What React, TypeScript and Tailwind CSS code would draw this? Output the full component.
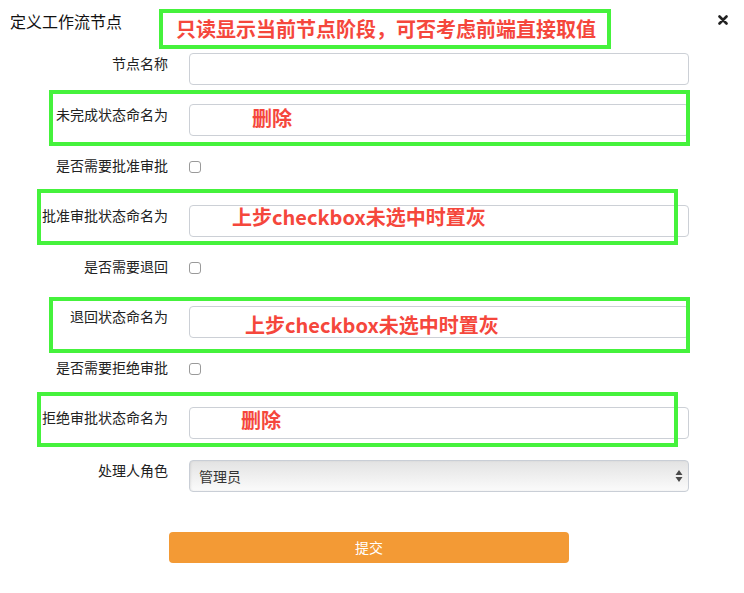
import { useState } from "react";

type Field = {
    label: string;
    kind: "text" | "check" | "select";
};

const fields: Field[] = [
    { label: "节点名称", kind: "text" },
    { label: "未完成状态命名为", kind: "text" },
    { label: "是否需要批准审批", kind: "check" },
    { label: "批准审批状态命名为", kind: "text" },
    { label: "是否需要退回", kind: "check" },
    { label: "退回状态命名为", kind: "text" },
    { label: "是否需要拒绝审批", kind: "check" },
    { label: "拒绝审批状态命名为", kind: "text" },
    { label: "处理人角色", kind: "select" },
];

// green review boxes drawn on top of the dialog
const notes = [
    { box: "left-[49px] top-[90px] w-[641px] h-[56px]", text: "删除", pad: "pl-[199px]" },
    { box: "left-[37px] top-[189px] w-[641px] h-[56px]", text: "上步checkbox未选中时置灰", pad: "pl-[191px]" },
    { box: "left-[49px] top-[297px] w-[641px] h-[56px]", text: "上步checkbox未选中时置灰", pad: "pl-[192px]" },
    { box: "left-[37px] top-[392px] w-[641px] h-[55px]", text: "删除", pad: "pl-[200px]" },
];

const App = () => {
    const [checks, setChecks] = useState<Record<string, boolean>>({});

    return (
        <div
            className="relative w-[744px] h-[593px] bg-white text-[#333] overflow-hidden"
            style={{ fontFamily: '"Noto Sans CJK SC", "Noto Sans", sans-serif' }}
        >
            {/* Header */}
            <div className="flex items-start justify-between h-[53px] pl-[10px] pr-[16px] pt-[11px]">
                <h1 className="text-[16px] leading-[20px] text-[#111]">定义工作流节点</h1>
                <svg width="10" height="10" viewBox="0 0 10 10" className="mt-[4px]">
                    <path d="M1.5 1.5 L8.5 8.5 M8.5 1.5 L1.5 8.5" stroke="#222" strokeWidth="2.6" strokeLinecap="round" />
                </svg>
            </div>

            {/* Form */}
            <div className="flex flex-col gap-[19px]">
                {fields.map((field) => (
                    <div
                        key={field.label}
                        className={`flex ${field.kind === "check" ? "h-[31px]" : "h-[32px]"} ${
                            field.kind === "select" ? "mt-[2px]" : ""
                        }`}
                    >
                        <label className="w-[168px] shrink-0 text-right text-[14px] leading-[20px] text-[#222]">
                            {field.label}
                        </label>
                        <div className="ml-[21px] w-[500px]">
                            {field.kind === "text" && (
                                <input
                                    type="text"
                                    className="w-full h-[32px] px-[10px] rounded-[4px] border border-[#ccd0d6] bg-white text-[14px] outline-none"
                                />
                            )}
                            {field.kind === "check" && (
                                <input
                                    type="checkbox"
                                    checked={!!checks[field.label]}
                                    onChange={() =>
                                        setChecks((prev) => ({ ...prev, [field.label]: !prev[field.label] }))
                                    }
                                    className="appearance-none block mt-[6px] w-[12px] h-[12px] rounded-[3px] border border-[#9a9a9a] bg-white checked:bg-[#3b82f6]"
                                />
                            )}
                            {field.kind === "select" && (
                                <div className="relative">
                                    <select className="appearance-none w-full h-[32px] pl-[9px] rounded-[4px] border border-[#c9ced6] bg-gradient-to-b from-[#e3e3e3] to-[#fbfbfb] text-[14px] text-[#333] outline-none shadow-[inset_1px_0_2px_rgba(0,0,0,0.08)]">
                                        <option>管理员</option>
                                    </select>
                                    <svg
                                        width="8"
                                        height="14"
                                        viewBox="0 0 8 14"
                                        className="absolute right-[6px] top-[9px] pointer-events-none"
                                    >
                                        <path d="M4 1 L7.5 6 L0.5 6 Z M4 13 L7.5 8 L0.5 8 Z" fill="#4a4a4a" />
                                    </svg>
                                </div>
                            )}
                        </div>
                    </div>
                ))}
            </div>

            {/* Submit */}
            <button className="block ml-[169px] mt-[40px] w-[400px] h-[31px] rounded-[4px] bg-[#f39a35] text-white text-[14px]">
                提交
            </button>

            {/* Review annotations */}
            <div className="absolute left-[159px] top-[9px] w-[452px] h-[40px] border-[4px] border-[#45f23c] flex items-center pl-[13px]">
                <span className="text-[20px] leading-[24px] font-bold text-[#f5473c] whitespace-nowrap">
                    只读显示当前节点阶段，可否考虑前端直接取值
                </span>
            </div>
            {notes.map((note, index) => (
                <div
                    key={index}
                    className={`absolute ${note.box} border-[4px] border-[#45f23c] flex items-center ${note.pad}`}
                >
                    <span className="text-[20px] leading-[24px] font-bold text-[#f5473c] whitespace-nowrap">
                        {note.text}
                    </span>
                </div>
            ))}
        </div>
    );
};

export default App;
